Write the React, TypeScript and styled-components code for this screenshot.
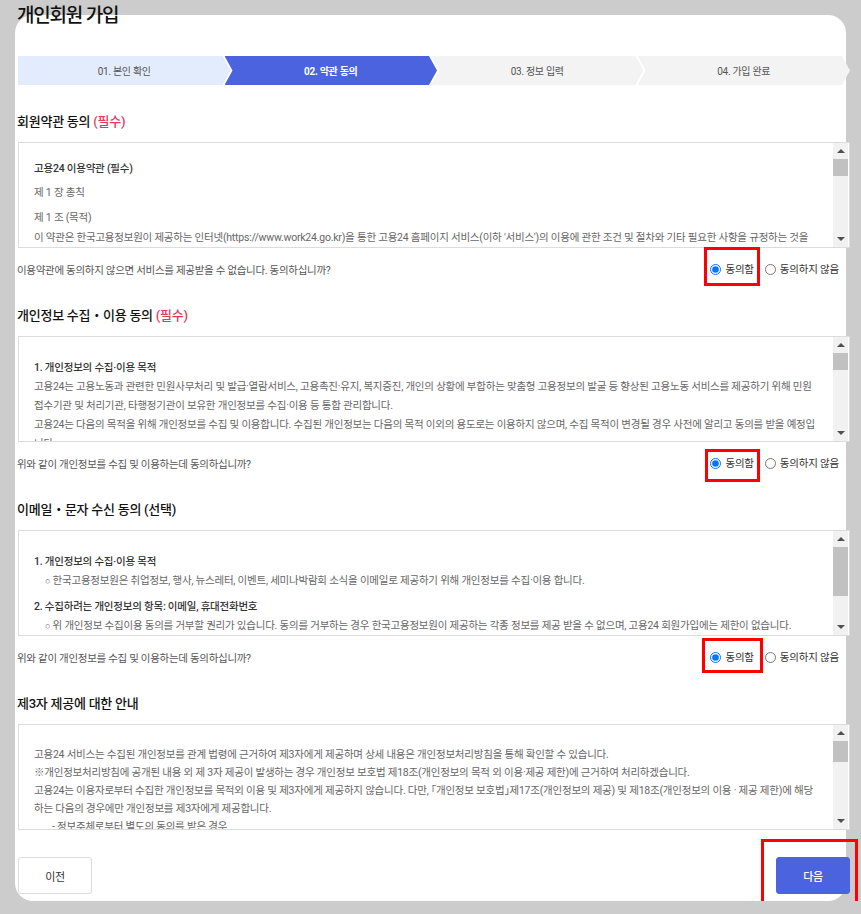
import React, { useState } from 'react';
import styled, { createGlobalStyle } from 'styled-components';

type StepState = 'done' | 'active' | 'todo';

interface StepItem {
  label: string;
  state: StepState;
}

interface Mark {
  t: number;
  r: number;
  b: number;
  l: number;
}

const steps: StepItem[] = [
  { label: '01. 본인 확인', state: 'done' },
  { label: '02. 약관 동의', state: 'active' },
  { label: '03. 정보 입력', state: 'todo' },
  { label: '04. 가입 완료', state: 'todo' },
];

interface AgreeRowProps {
  name: string;
  question: string;
  mark: Mark;
}

function AgreeRow({ name, question, mark }: AgreeRowProps) {
  const [value, setValue] = useState<string>('Y');

  return (
    <Question>
      <span>{question}</span>
      <Options>
        <Option>
          <Radio type="radio" name={name} checked={value === 'Y'} onChange={() => setValue('Y')} />
          동의함
          <Highlight $t={mark.t} $r={mark.r} $b={mark.b} $l={mark.l} />
        </Option>
        <Option>
          <Radio type="radio" name={name} checked={value === 'N'} onChange={() => setValue('N')} />
          동의하지 않음
        </Option>
      </Options>
    </Question>
  );
}

interface TermsProps {
  pt: number;
  lh: number;
  thumb: number;
  children: React.ReactNode;
}

// the boxes scroll in the original; the bar is drawn so it shows up in a headless capture
function Terms({ pt, lh, thumb, children }: TermsProps) {
  return (
    <TermsBox>
      <TermsBody $pt={pt} $lh={lh}>
        {children}
      </TermsBody>
      <ScrollBar>
        <ScrollArrow $dir="up" />
        <ScrollTrack>
          <ScrollThumb $size={thumb} />
        </ScrollTrack>
        <ScrollArrow $dir="down" />
      </ScrollBar>
    </TermsBox>
  );
}

function App() {
  return (
    <>
      <GlobalStyle />
      <Panel>
        <Title>개인회원 가입</Title>

        <Steps>
          {steps.map((step, i) => (
            <Step key={step.label} $state={step.state} $first={i === 0}>
              {step.label}
            </Step>
          ))}
        </Steps>

        <Section>
          <Heading>
            회원약관 동의 <Required>(필수)</Required>
          </Heading>
          <Terms pt={16} lh={20} thumb={17}>
            <Para $strong>고용24 이용약관 (필수)</Para>
            <Para $gap={4}>제 1 장 총칙</Para>
            <Para $gap={5}>제 1 조 (목적)</Para>
            <Para>
              이 약관은 한국고용정보원이 제공하는 인터넷(https://www.work24.go.kr)을 통한 고용24 홈페이지 서비스(이하
              '서비스')의 이용에 관한 조건 및 절차와 기타 필요한 사항을 규정하는 것을 목적으로 합니다.
            </Para>
            <Para $gap={5}>제 2 조 (약관의 효력과 변경)</Para>
            <Para>① 이 약관은 서비스 화면에 게시하거나 기타의 방법으로 이용자에게 공지함으로써 효력이 발생합니다.</Para>
          </Terms>
          <AgreeRow
            name="terms"
            question="이용약관에 동의하지 않으면 서비스를 제공받을 수 없습니다. 동의하십니까?"
            mark={{ t: -16, r: -6, b: -9, l: -6 }}
          />
        </Section>

        <Section>
          <Heading>
            개인정보 수집・이용 동의 <Required>(필수)</Required>
          </Heading>
          <Terms pt={21} lh={19} thumb={17}>
            <Para $strong>1. 개인정보의 수집·이용 목적</Para>
            <Para>
              고용24는 고용노동과 관련한 민원사무처리 및 발급·열람서비스, 고용촉진·유지, 복지증진, 개인의 상황에 부합하는
              맞춤형 고용정보의 발굴 등 향상된 고용노동 서비스를 제공하기 위해 민원접수기관 및 처리기관, 타행정기관이 보유한
              개인정보를 수집·이용 등 통합 관리합니다.
            </Para>
            <Para>
              고용24는 다음의 목적을 위해 개인정보를 수집 및 이용합니다. 수집된 개인정보는 다음의 목적 이외의 용도로는
              이용하지 않으며, 수집 목적이 변경될 경우 사전에 알리고 동의를 받을 예정입니다.
            </Para>
            <Para $indent={11}>가. 회원 가입 및 관리: 회원제 서비스 이용에 따른 본인 확인, 개인 식별, 가입 의사 확인</Para>
          </Terms>
          <AgreeRow
            name="privacy"
            question="위와 같이 개인정보를 수집 및 이용하는데 동의하십니까?"
            mark={{ t: -8, r: -6, b: -11, l: -5 }}
          />
        </Section>

        <Section>
          <Heading>이메일・문자 수신 동의 (선택)</Heading>
          <Terms pt={21} lh={19} thumb={49}>
            <Para $strong>1. 개인정보의 수집·이용 목적</Para>
            <Para $indent={11}>
              <Bullet>○</Bullet> 한국고용정보원은 취업정보, 행사, 뉴스레터, 이벤트, 세미나박람회 소식을 이메일로 제공하기 위해
              개인정보를 수집·이용 합니다.
            </Para>
            <Para $strong $gap={6}>2. 수집하려는 개인정보의 항목: 이메일, 휴대전화번호</Para>
            <Para $indent={11}>
              <Bullet>○</Bullet> 위 개인정보 수집이용 동의를 거부할 권리가 있습니다. 동의를 거부하는 경우 한국고용정보원이
              제공하는 각종 정보를 제공 받을 수 없으며, 고용24 회원가입에는 제한이 없습니다.
            </Para>
            <Para $strong $gap={6}>3. 개인정보의 보유 및 이용기간: 회원 탈퇴 시까지</Para>
          </Terms>
          <AgreeRow
            name="marketing"
            question="위와 같이 개인정보를 수집 및 이용하는데 동의하십니까?"
            mark={{ t: -13, r: -9, b: -8, l: -8 }}
          />
        </Section>

        <Section>
          <Heading>제3자 제공에 대한 안내</Heading>
          <Terms pt={21} lh={18} thumb={21}>
            <Para>
              고용24 서비스는 수집된 개인정보를 관계 법령에 근거하여 제3자에게 제공하며 상세 내용은 개인정보처리방침을 통해
              확인할 수 있습니다.
            </Para>
            <Para>
              ※개인정보처리방침에 공개된 내용 외 제 3자 제공이 발생하는 경우 개인정보 보호법 제18조(개인정보의 목적 외
              이용·제공 제한)에 근거하여 처리하겠습니다.
            </Para>
            <Para>
              고용24는 이용자로부터 수집한 개인정보를 목적외 이용 및 제3자에게 제공하지 않습니다. 다만, ｢개인정보
              보호법｣제17조(개인정보의 제공) 및 제18조(개인정보의 이용 · 제공 제한)에 해당하는 다음의 경우에만 개인정보를
              제3자에게 제공합니다.
            </Para>
            <Para $indent={18}>- 정보주체로부터 별도의 동의를 받은 경우</Para>
            <Para $indent={18}>- 법률에 특별한 규정이 있거나 법령상 의무를 준수하기 위하여 불가피한 경우</Para>
          </Terms>
        </Section>

        <Footer>
          <Button type="button">이전</Button>
          <Button type="button" $primary>
            다음
            <Highlight $t={-19} $r={-9} $b={-16} $l={-16} />
          </Button>
        </Footer>
      </Panel>
    </>
  );
}

export default App;

const GlobalStyle = createGlobalStyle`
  html, body {
    margin: 0;
    padding: 0;
    background: #cccccc;
  }
  body {
    font-family: Roboto, 'Noto Sans CJK KR', sans-serif;
    color: #333;
  }
  * {
    box-sizing: border-box;
  }
`;

const Panel = styled.div`
  display: flex;
  flex-direction: column;
  width: 831px;
  margin: 15px 0 0 15px;
  padding: 0 0 7px 3px;
  background: #fff;
  border-radius: 18px;
`;

const Title = styled.h1`
  margin: -11px 0 0 -1px;
  font-size: 19px;
  line-height: 24px;
  font-weight: 500;
  letter-spacing: -1.2px;
  color: #111;
`;

const Steps = styled.ol`
  display: flex;
  width: 832px;
  height: 29px;
  margin: 28px 0 27px;
  padding: 0;
  list-style: none;
`;

const Step = styled.li<{ $state: StepState; $first?: boolean }>`
  flex: 1 1 0;
  margin-left: ${(p) => (p.$first ? 0 : -6)}px;
  display: flex;
  align-items: center;
  justify-content: center;
  font-size: 10px;
  letter-spacing: -0.3px;
  font-weight: ${(p) => (p.$state === 'active' ? 700 : 400)};
  color: ${(p) => (p.$state === 'active' ? '#fff' : '#555')};
  background: ${(p) => (p.$state === 'done' ? '#e2ecfc' : p.$state === 'active' ? '#4c63df' : '#f3f3f3')};
  clip-path: ${(p) =>
    p.$first
      ? 'polygon(0 0, calc(100% - 8px) 0, 100% 50%, calc(100% - 8px) 100%, 0 100%)'
      : 'polygon(0 0, calc(100% - 8px) 0, 100% 50%, calc(100% - 8px) 100%, 0 100%, 8px 50%)'};
`;

const Section = styled.section`
  width: 832px;
  margin-bottom: 15px;
`;

const Heading = styled.h2`
  margin: 0 0 10px -1px;
  font-size: 13px;
  line-height: 20px;
  font-weight: 500;
  letter-spacing: -0.25px;
  color: #111;
`;

const Required = styled.span`
  color: #e5385d;
`;

const TermsBox = styled.div`
  display: flex;
  height: 106px;
  border: 1px solid #dcdcdc;
  background: #fff;
`;

const TermsBody = styled.div<{ $pt: number; $lh: number }>`
  flex: 1;
  overflow: hidden;
  padding: ${(p) => p.$pt}px 15px 0;
  font-size: 10.5px;
  line-height: ${(p) => p.$lh}px;
  letter-spacing: -0.22px;
  color: #666;
`;

const ScrollBar = styled.div`
  display: flex;
  flex-direction: column;
  flex: none;
  width: 15px;
  margin-right: 1px;
  background: #f1f1f1;
`;

const ScrollArrow = styled.div<{ $dir: 'up' | 'down' }>`
  display: flex;
  align-items: center;
  justify-content: center;
  flex: none;
  height: 16px;
  &::before {
    content: '';
    border-left: 4px solid transparent;
    border-right: 4px solid transparent;
    ${(p) => (p.$dir === 'up' ? 'border-bottom: 4px solid #505050;' : 'border-top: 4px solid #505050;')}
  }
`;

const ScrollTrack = styled.div`
  flex: 1;
`;

const ScrollThumb = styled.div<{ $size: number }>`
  height: ${(p) => p.$size}px;
  background: #c1c1c1;
`;

const Para = styled.p<{ $gap?: number; $indent?: number; $strong?: boolean }>`
  margin: ${(p) => p.$gap || 0}px 0 0;
  padding-left: ${(p) => p.$indent || 0}px;
  font-weight: ${(p) => (p.$strong ? 500 : 400)};
  color: ${(p) => (p.$strong ? '#333' : '#666')};
  word-break: break-all;
`;

const Bullet = styled.span`
  font-family: 'Liberation Sans', sans-serif;
  font-size: 9px;
`;

const Question = styled.div`
  display: flex;
  align-items: center;
  justify-content: space-between;
  height: 43px;
  margin-left: -1px;
  padding-right: 11px;
  font-size: 10.5px;
  letter-spacing: -0.3px;
  color: #555;
`;

const Options = styled.div`
  display: flex;
  align-items: center;
  gap: 11px;
  letter-spacing: -0.2px;
`;

const Option = styled.label`
  position: relative;
  display: flex;
  align-items: center;
  gap: 4px;
  line-height: 14px;
  color: #333;
  cursor: pointer;
`;

const Radio = styled.input`
  width: 11px;
  height: 11px;
  margin: 0;
`;

const Highlight = styled.span<{ $t: number; $r: number; $b: number; $l: number }>`
  position: absolute;
  top: ${(p) => p.$t}px;
  right: ${(p) => p.$r}px;
  bottom: ${(p) => p.$b}px;
  left: ${(p) => p.$l}px;
  border: 3px solid #ff0000;
  pointer-events: none;
`;

const Footer = styled.div`
  display: flex;
  justify-content: space-between;
  width: 832px;
  margin-top: 12px;
`;

const Button = styled.button<{ $primary?: boolean }>`
  position: relative;
  width: 74px;
  height: 37px;
  border-radius: 3px;
  border: 1px solid ${(p) => (p.$primary ? '#4c63df' : '#dcdcdc')};
  background: ${(p) => (p.$primary ? '#4c63df' : '#fff')};
  color: ${(p) => (p.$primary ? '#fff' : '#333')};
  font-family: inherit;
  font-size: 11px;
  font-weight: ${(p) => (p.$primary ? 500 : 400)};
  letter-spacing: -0.3px;
  cursor: pointer;
`;
